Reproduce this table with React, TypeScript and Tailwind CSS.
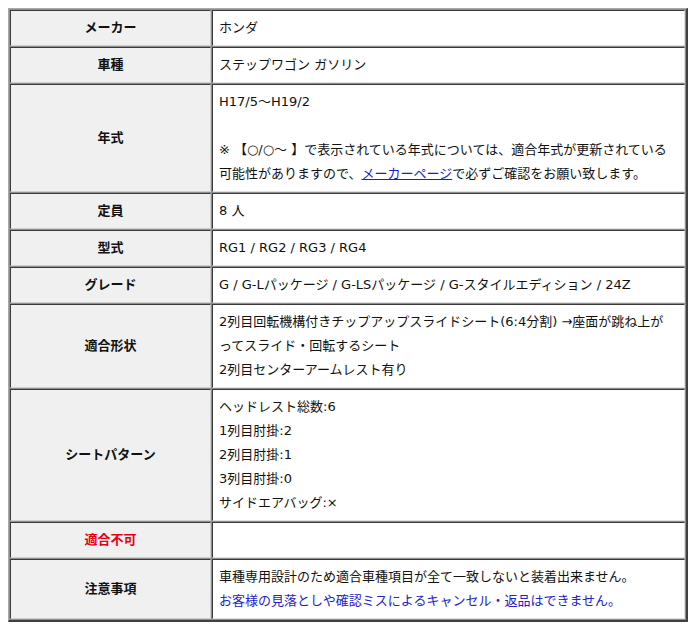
import React from 'react'

type Row = {
  label: string
  labelClass?: string
  content: React.ReactNode
}

const rows: Row[] = [
  { label: 'メーカー', content: 'ホンダ' },
  { label: '車種', content: 'ステップワゴン ガソリン' },
  {
    label: '年式',
    content: (
      <>
        H17/5～H19/2
        <br />
        <br />※ 【○/○～ 】で表示されている年式については、適合年式が更新されている可能性がありますので、
        <a href="#" className="text-[#1a1adb] underline">
          メーカーページ
        </a>
        で必ずご確認をお願い致します。
      </>
    ),
  },
  { label: '定員', content: '8 人' },
  { label: '型式', content: 'RG1 / RG2 / RG3 / RG4' },
  { label: 'グレード', content: 'G / G-Lパッケージ / G-LSパッケージ / G-スタイルエディション / 24Z' },
  {
    label: '適合形状',
    content: (
      <>
        2列目回転機構付きチップアップスライドシート(6:4分割) →座面が跳ね上がってスライド・回転するシート
        <br />
        2列目センターアームレスト有り
      </>
    ),
  },
  {
    label: 'シートパターン',
    content: (
      <>
        ヘッドレスト総数:6
        <br />
        1列目肘掛:2
        <br />
        2列目肘掛:1
        <br />
        3列目肘掛:0
        <br />
        サイドエアバッグ:×
      </>
    ),
  },
  { label: '適合不可', labelClass: 'text-[#e60012]', content: '' },
  {
    label: '注意事項',
    content: (
      <>
        車種専用設計のため適合車種項目が全て一致しないと装着出来ません。
        <br />
        <span className="text-[#2323c8]">お客様の見落としや確認ミスによるキャンセル・返品はできません。</span>
      </>
    ),
  },
]

export default function App() {
  return (
    <div className="bg-white min-h-[628px] pt-2 pl-2 font-['DejaVu_Sans','Noto_Sans_CJK_JP',sans-serif] text-[13px] leading-[24px] text-[#111]">
      <table className="w-[680px] border-separate border-spacing-[1px] bg-[#8e8e8e] border-t border-l border-r-2 border-b-2 border-t-[#a8a8a8] border-l-[#a8a8a8] border-r-[#404040] border-b-[#404040]">
        <tbody>
          {rows.map((row) => (
            <tr key={row.label}>
              <th
                className={`w-[201px] bg-[#f0f0f0] py-[5px] px-1 text-center font-bold border border-t-[#3a3a3a] border-l-[#3a3a3a] border-r-[#cfcfcf] border-b-[#cfcfcf] ${row.labelClass ?? ''}`}
              >
                {row.label}
              </th>
              <td className="bg-white py-[5px] pl-[6px] pr-[15px] text-left align-middle border border-t-[#3a3a3a] border-l-[#3a3a3a] border-r-[#e0e0e0] border-b-[#e0e0e0]">
                {row.content}
              </td>
            </tr>
          ))}
        </tbody>
      </table>
    </div>
  )
}
